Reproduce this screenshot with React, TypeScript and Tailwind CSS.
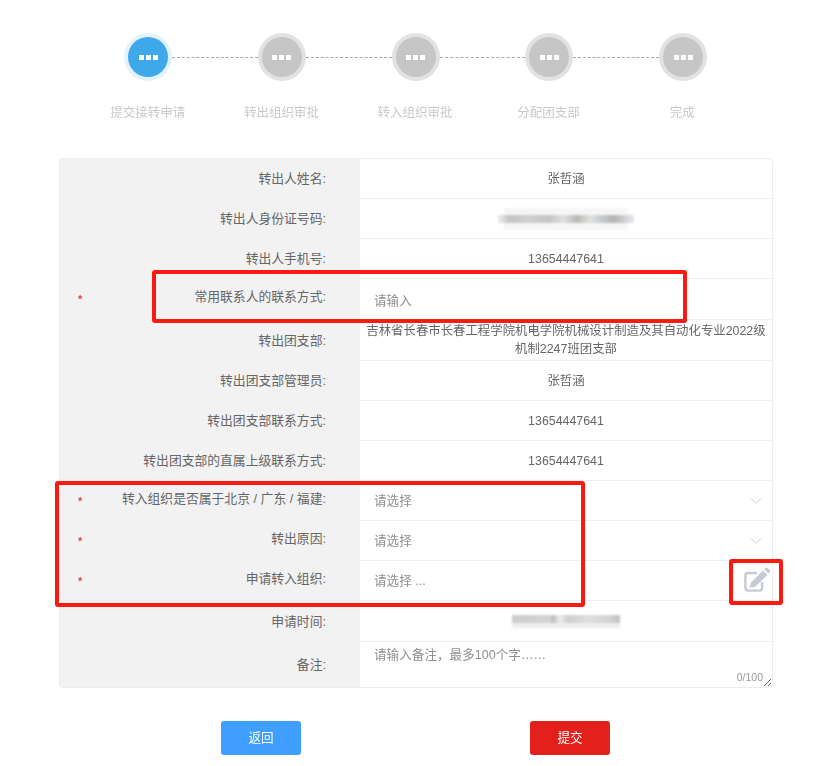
import { ChevronDown } from 'lucide-react'

const font = '[font-family:"Liberation_Sans","Noto_Sans_CJK_SC",sans-serif]'

const steps = ['提交接转申请', '转出组织审批', '转入组织审批', '分配团支部', '完成']

function Dots() {
  return (
    <div className="flex gap-[2px]">
      <span className="h-[5px] w-[5px] bg-white" />
      <span className="h-[5px] w-[5px] bg-white" />
      <span className="h-[5px] w-[5px] bg-white" />
    </div>
  )
}

function Circle({ active }: { active?: boolean }) {
  return (
    <div
      className={
        active
          ? 'flex h-[48px] w-[48px] shrink-0 items-center justify-center rounded-full bg-[#e3f3fd]'
          : 'flex h-[48px] w-[48px] shrink-0 items-center justify-center rounded-full bg-[#e2e2e2]'
      }
    >
      <div
        className={
          active
            ? 'flex h-[40px] w-[40px] items-center justify-center rounded-full bg-[#3ea8ea]'
            : 'flex h-[40px] w-[40px] items-center justify-center rounded-full bg-[#c6c6c6]'
        }
      >
        <Dots />
      </div>
    </div>
  )
}

function Row({
  label,
  required,
  height = 'h-[40px]',
  last,
  children,
}: {
  label: string
  required?: boolean
  height?: string
  last?: boolean
  children: React.ReactNode
}) {
  return (
    <div className={`flex ${height} ${last ? '' : 'border-b border-[#efefef]'}`}>
      <div className="relative flex w-[300px] shrink-0 items-center justify-end bg-[#f2f2f2] pr-[34px] text-[12.8px] text-[#666]">
        {required && (
          <span className="absolute left-[18px] top-1/2 -translate-y-[5px] text-[11px] font-bold leading-none text-[#e8424a]">*</span>
        )}
        <span className={required ? '-mt-[4px]' : 'pt-[1px]'}>{label}</span>
      </div>
      <div className="relative flex min-w-0 flex-1 items-center justify-center text-center text-[12.4px] leading-[18px] text-[#666]">
        {children}
      </div>
    </div>
  )
}

function Placeholder({ text, arrow, low }: { text: string; arrow?: boolean; low?: boolean }) {
  return (
    <div className={`flex w-full items-center justify-between pl-[14px] pr-[6px] text-left text-[12.6px] text-[#8f8f8f] ${low ? 'pt-[3px]' : 'pt-[1px]'}`}>
      <span>{text}</span>
      {arrow && <ChevronDown size={20} strokeWidth={1} className="text-[#bfc3cb]" />}
    </div>
  )
}

// mosaic used to hide the id number / date in the screenshot
function IdMosaic() {
  return (
    <div className="relative h-[22px] w-[124px] bg-[#f6f6f6] blur-[1px]">
      <div className="absolute -left-[6px] -right-[6px] top-[7px] h-[8px] bg-[linear-gradient(90deg,#eeeeee_0%,#c4c4c4_8%,#cfcfcf_22%,#c6c6c6_38%,#e0e0e0_48%,#b8b8b8_58%,#e2e2de_68%,#ccd0d4_74%,#b4b4b4_85%,#d0d0d0_93%,#e4e8ee_100%)]" />
    </div>
  )
}

function DateMosaic() {
  return (
    <div className="flex w-[108px] flex-col blur-[1px]">
      <div className="h-[8px] bg-[linear-gradient(90deg,#cccccc_0%,#d4d4d4_35%,#bcbcbc_38%,#ececec_44%,#cfcfcf_52%,#dedede_70%,#d4d4d4_90%,#c0c0c0_100%)]" />
      <div className="h-[5px] bg-[#eeeeee]" />
    </div>
  )
}

function EditIcon() {
  return (
    <svg width="28" height="26" viewBox="0 0 28 26" className="absolute left-[384px] top-[6px] text-[#c6cad2]">
      <path
        d="M13 6H4a2.6 2.6 0 0 0-2.6 2.6V21a2.6 2.6 0 0 0 2.6 2.6h11.5a2.6 2.6 0 0 0 2.6-2.6v-6"
        fill="none"
        stroke="currentColor"
        strokeWidth="2.4"
      />
      <path d="M5.5 20.5 7 15.5 19 3.5 23.5 8 11 20Z" fill="currentColor" />
      <path d="M20.3 2.2 21.6 1a1.5 1.5 0 0 1 2 0l2.2 2.2a1.5 1.5 0 0 1 0 2L24.7 6.6Z" fill="currentColor" />
    </svg>
  )
}

export default function App() {
  return (
    <div className={`relative h-[766px] w-[831px] overflow-hidden bg-white ${font}`}>
      <div className="blur-[0.4px]">
        {/* Steps */}
        <div className="ml-[124px] flex w-[583px] items-center pt-[33px]">
          {steps.map((s, i) => (
            <div key={s} className={i === steps.length - 1 ? 'flex' : 'flex flex-1 items-center'}>
              <Circle active={i === 0} />
              {i < steps.length - 1 && <div className="flex-1 border-t border-dashed border-[#a8a8a8]" />}
            </div>
          ))}
        </div>
        <div className="ml-[81px] mt-[23px] grid w-[668px] grid-cols-5 text-center text-[12.5px] leading-[18px] text-[#c9c9c9]">
          {steps.map((s) => (
            <div key={s}>{s}</div>
          ))}
        </div>

        {/* Form table */}
        <div className="ml-[59px] mt-[36px] w-[714px] overflow-hidden rounded-[4px] border border-[#ececec]">
          <Row label="转出人姓名:">张哲涵</Row>
          <Row label="转出人身份证号码:"><IdMosaic /></Row>
          <Row label="转出人手机号:">13654447641</Row>
          <Row label="常用联系人的联系方式:" required height="h-[41px]">
            <Placeholder text="请输入" low />
          </Row>
          <Row label="转出团支部:" height="h-[41px]">
            <div className="-mt-[1px] whitespace-nowrap">吉林省长春市长春工程学院机电学院机械设计制造及其自动化专业2022级<br />机制2247班团支部</div>
          </Row>
          <Row label="转出团支部管理员:">张哲涵</Row>
          <Row label="转出团支部联系方式:">13654447641</Row>
          <Row label="转出团支部的直属上级联系方式:">13654447641</Row>
          <Row label="转入组织是否属于北京 / 广东 / 福建:" required>
            <Placeholder text="请选择" arrow />
          </Row>
          <Row label="转出原因:" required>
            <Placeholder text="请选择" arrow />
          </Row>
          <Row label="申请转入组织:" required>
            <Placeholder text="请选择 ..." />
            <EditIcon />
          </Row>
          <Row label="申请时间:" height="h-[41px]"><DateMosaic /></Row>
          <Row label="备注:" height="h-[45px]" last>
            <textarea
              placeholder="请输入备注，最多100个字……"
              className="h-full w-full px-[14px] pt-[4px] text-[12.6px] leading-[18px] outline-none placeholder:text-[#8f8f8f]"
            />
            <span className="absolute bottom-[5px] right-[9px] text-[10.5px] leading-none text-[#999]">0/100</span>
          </Row>
        </div>

        {/* Buttons */}
        <div className="ml-[221px] mt-[33px] flex w-[389px] justify-between text-[12.6px] text-white">
          <button className="h-[34px] w-[80px] rounded-[3px] bg-[#409eff]">返回</button>
          <button className="h-[34px] w-[80px] rounded-[3px] bg-[#e3211c]">提交</button>
        </div>
      </div>

      {/* Red annotation boxes */}
      <div className="absolute left-[152px] top-[270px] h-[53px] w-[535px] rounded-[3px] border-[4px] border-[#fb1a10]" />
      <div className="absolute left-[55px] top-[481px] h-[126px] w-[530px] rounded-[3px] border-[4px] border-[#fb1a10]" />
      <div className="absolute left-[729px] top-[559px] h-[46px] w-[54px] rounded-[3px] border-[4px] border-[#fb1a10]" />
    </div>
  )
}
